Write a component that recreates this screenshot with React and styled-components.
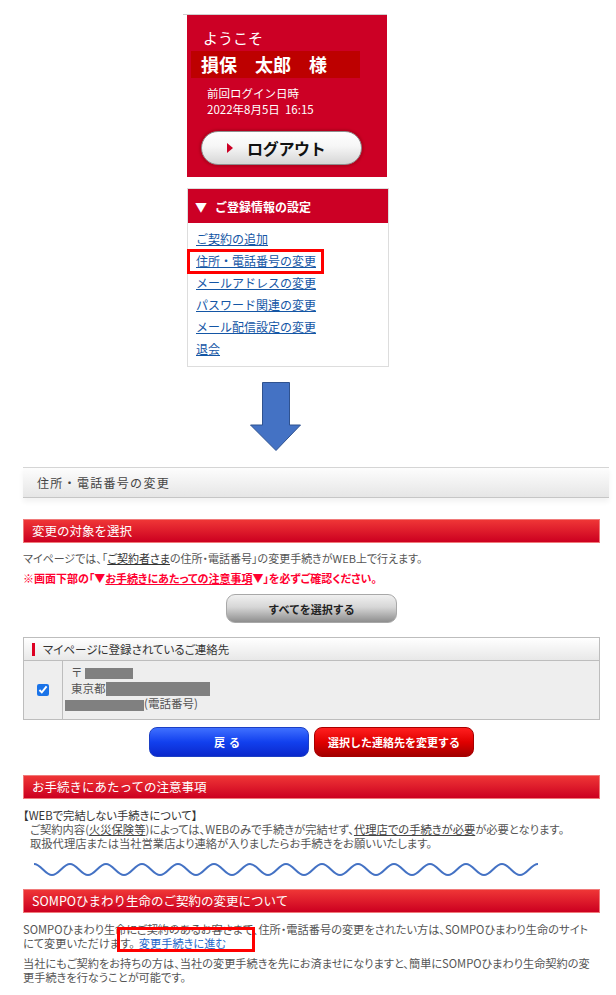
import styled, { createGlobalStyle } from "styled-components";

const GlobalStyle = createGlobalStyle`
  body {
    margin: 0;
    background: #fff;
    font-family: "Noto Sans CJK JP", "Noto Sans", sans-serif;
  }
  * {
    box-sizing: border-box;
  }
`;

const Page = styled.div`
  padding-top: 14px;
  padding-bottom: 20px;
`;

const TopColumn = styled.div`
  margin-left: 187px;
  width: 202px;
  display: flex;
  flex-direction: column;
`;

const TopRule = styled.div`
  width: 204px;
  height: 1px;
  margin-left: -4px;
  background: #cfcfcf;
`;

const Welcome = styled.section`
  width: 200px;
  background: #cc0025;
  color: #fff;
  padding: 13px 0 12px;
  display: flex;
  flex-direction: column;
`;

const Greeting = styled.div`
  margin-left: 16px;
  font-size: 15px;
  line-height: 20px;
`;

const NameBand = styled.div`
  margin: 3px 0 0 4px;
  width: 169px;
  height: 27px;
  padding-left: 10px;
  background: #bd0000;
  font-size: 18px;
  font-weight: 700;
  line-height: 27px;
  white-space: pre;
`;

const LoginInfo = styled.div`
  margin: 7px 0 0 20px;
  font-size: 11.5px;
  line-height: 16px;
`;

const LogoutButton = styled.button`
  margin: 14px 0 0 14px;
  width: 161px;
  height: 34px;
  border-radius: 17px;
  border: 1px solid #8d8d8d;
  background: linear-gradient(#ffffff, #f6f6f6 45%, #d6d6d6);
  box-shadow: 0 0 2px 2px #b5001e;
  display: flex;
  align-items: center;
  padding: 0 0 0 25px;
  font-family: inherit;
  font-size: 16px;
  font-weight: 700;
  color: #111;
  letter-spacing: -0.3px;

  &::before {
    content: "";
    width: 0;
    height: 0;
    border-left: 6px solid #cc0025;
    border-top: 5px solid transparent;
    border-bottom: 5px solid transparent;
    margin-right: 14px;
  }
`;

const Menu = styled.nav`
  margin-top: 11px;
  width: 202px;
  border: 1px solid #dddddd;
  background: #fff;
`;

const MenuHead = styled.div`
  height: 34px;
  background: #cc0025;
  color: #fff;
  padding-left: 7px;
  display: flex;
  align-items: center;
  gap: 8px;
  font-size: 12px;
  font-weight: 700;
`;

const MenuList = styled.ul`
  list-style: none;
  margin: 0;
  padding: 5px 0 6px 8px;
`;

const MenuItem = styled.li`
  position: relative;
  font-size: 12px;
  line-height: 22px;
`;

const MenuLink = styled.a`
  color: #1456a5;
  text-decoration: underline;
`;

const Highlight = styled.span`
  position: absolute;
  left: ${(p) => p.$left}px;
  top: ${(p) => p.$top}px;
  width: ${(p) => p.$width}px;
  height: 25px;
  border: 3px solid #ff0000;
  pointer-events: none;
`;

const Arrow = styled.svg`
  display: block;
  margin: 15px 0 0 63px;
`;

const Main = styled.main`
  margin: 15px 0 0 23px;
  width: 586px;
`;

const PageTitle = styled.div`
  height: 31px;
  border-top: 1px solid #d5d5d5;
  border-bottom: 1px solid #c6c6c6;
  background: linear-gradient(#fdfdfd, #e6e6e6);
  box-shadow: 0 4px 5px rgba(0, 0, 0, 0.05);
  padding-left: 14px;
  font-size: 12px;
  line-height: 29px;
  letter-spacing: 1.3px;
  color: #444;
`;

const Content = styled.div`
  width: 577px;
`;

const BarTitle = styled.h2`
  margin: ${(p) => p.$top}px 0 0;
  height: 24px;
  border: 1px solid #f07a7a;
  background: linear-gradient(#ef3636, #cc0020);
  color: #fff;
  font-size: 12.5px;
  font-weight: 400;
  line-height: 22px;
  padding-left: 8px;
`;

const Lead = styled.p`
  margin: 5px 0 0;
  font-size: 11px;
  line-height: 20px;
  color: #555;
  font-feature-settings: "palt";
  white-space: nowrap;

  u {
    color: #333;
  }
`;

const Warning = styled.p`
  margin: 0;
  font-size: 11px;
  line-height: 20px;
  font-weight: 700;
  color: #ff0030;
  font-feature-settings: "palt";
  white-space: nowrap;
`;

const Centered = styled.div`
  display: flex;
  justify-content: center;
  gap: 5px;
  margin-top: ${(p) => p.$top}px;
`;

const GreyButton = styled.button`
  width: 171px;
  height: 29px;
  border-radius: 9px;
  border: 1px solid #a8a8a8;
  background: linear-gradient(#f0f0f0, #d6d6d6 45%, #8e8e8e);
  font-family: inherit;
  font-size: 11px;
  font-weight: 700;
  color: #222;
`;

const ActionButton = styled.button`
  width: 160px;
  height: 30px;
  border-radius: 8px;
  border: 1px solid ${(p) => (p.$tone === "blue" ? "#1c3fc4" : "#a80000")};
  background: ${(p) =>
    p.$tone === "blue"
      ? "linear-gradient(#3f70ff, #1240ee 50%, #0a28cc)"
      : "linear-gradient(#ff1f1f, #e00000 50%, #a30000)"};
  color: #fff;
  font-family: inherit;
  font-size: 11px;
  font-weight: 700;
  letter-spacing: ${(p) => (p.$tone === "blue" ? "4px" : "0")};
`;

const Table = styled.div`
  margin-top: 14px;
  border: 1px solid #bdbdbd;
`;

const TableHead = styled.div`
  height: 23px;
  border-bottom: 1px solid #bdbdbd;
  background: linear-gradient(#ffffff, #e8e8e8);
  display: flex;
  align-items: center;
  padding-left: 8px;
  font-size: 11.5px;
  color: #333;
  font-feature-settings: "palt";

  &::before {
    content: "";
    width: 3px;
    height: 13px;
    background: #dd0022;
    margin-right: 8px;
  }
`;

const TableRow = styled.div`
  display: grid;
  grid-template-columns: 39px 1fr;
  height: 58px;
  background: #eeeeee;
`;

const CheckCell = styled.div`
  border-right: 1px solid #bdbdbd;
  display: flex;
  align-items: center;
  justify-content: center;

  input {
    margin: 0;
    width: 12px;
    height: 12px;
    accent-color: #1a73e8;
  }
`;

const InfoCell = styled.div`
  padding: 4px 0 0 8px;
  font-size: 11.5px;
  line-height: 15.5px;
  color: #555;
`;

const Redact = styled.span`
  display: inline-block;
  vertical-align: middle;
  width: ${(p) => p.$w}px;
  height: ${(p) => p.$h}px;
  margin-left: ${(p) => p.$ml || 0}px;
  background: #808080;
`;

const NoticeHead = styled.p`
  margin: 9px 0 0;
  font-size: 11.3px;
  line-height: 14px;
  color: #333;
  font-feature-settings: "palt";
`;

const NoticeBody = styled.p`
  margin: 0;
  padding-left: 7px;
  font-size: 11.3px;
  line-height: 14px;
  color: #555;
  font-feature-settings: "palt";
  white-space: nowrap;

  u {
    color: #444;
  }
`;

const Wave = styled.svg`
  display: block;
  margin: 12px 0 0 10px;
`;

const Para = styled.p`
  margin: ${(p) => p.$top}px 0 0;
  font-size: 11.2px;
  line-height: 14px;
  color: #555;
  font-feature-settings: "palt";
  white-space: nowrap;
`;

const InlineLink = styled.a`
  position: relative;
  margin-left: 4px;
  color: #1d67c9;
  text-decoration: underline;
`;

const links = [
  "ご契約の追加",
  "住所・電話番号の変更",
  "メールアドレスの変更",
  "パスワード関連の変更",
  "メール配信設定の変更",
  "退会",
];

const wavePath = (() => {
  const half = 18;
  const top = 2;
  const bottom = 13;
  let d = `M1 ${top}`;
  for (let i = 0; i < 28; i++) {
    const x = 1 + i * half;
    const from = i % 2 === 0 ? top : bottom;
    const to = i % 2 === 0 ? bottom : top;
    d += ` C${x + 7} ${from} ${x + 11} ${to} ${x + half} ${to}`;
  }
  return d;
})();

export default function App() {
  return (
    <>
      <GlobalStyle />
      <Page>
        <TopColumn>
          <TopRule />
          <Welcome>
            <Greeting>ようこそ</Greeting>
            <NameBand>損保　太郎　様</NameBand>
            <LoginInfo>
              前回ログイン日時
              <br />
              2022年8月5日&nbsp;&nbsp;16:15
            </LoginInfo>
            <LogoutButton>ログアウト</LogoutButton>
          </Welcome>

          <Menu>
            <MenuHead>
              <span>▼</span>
              <span>ご登録情報の設定</span>
            </MenuHead>
            <MenuList>
              {links.map((label, i) => (
                <MenuItem key={label}>
                  <MenuLink href="#">{label}</MenuLink>
                  {i === 1 && <Highlight $left={-9} $top={-1} $width={137} />}
                </MenuItem>
              ))}
            </MenuList>
          </Menu>

          <Arrow width="52" height="70" viewBox="0 0 52 70">
            <path
              d="M12.5 0.5 H39.5 V43 H50.5 L26 68.5 L0.5 43 H12.5 Z"
              fill="#4472c4"
              stroke="#2f528f"
              strokeWidth="1"
            />
          </Arrow>
        </TopColumn>

        <Main>
          <PageTitle>住所・電話番号の変更</PageTitle>
          <Content>
            <BarTitle $top={21}>変更の対象を選択</BarTitle>
            <Lead>
              マイページでは、「<u>ご契約者さま</u>の住所・電話番号」の変更手続きがWEB上で行えます。
            </Lead>
            <Warning>
              ※画面下部の「▼<u>お手続きにあたっての注意事項</u>▼」を必ずご確認ください。
            </Warning>

            <Centered $top={6}>
              <GreyButton>すべてを選択する</GreyButton>
            </Centered>

            <Table>
              <TableHead>マイページに登録されているご連絡先</TableHead>
              <TableRow>
                <CheckCell>
                  <input type="checkbox" defaultChecked />
                </CheckCell>
                <InfoCell>
                  〒<Redact $w={48} $h={11} $ml={2} />
                  <br />
                  東京都<Redact $w={104} $h={14} />
                  <br />
                  <Redact $w={79} $h={11} $ml={-6} />(電話番号)
                </InfoCell>
              </TableRow>
            </Table>

            <Centered $top={7}>
              <ActionButton $tone="blue">戻る</ActionButton>
              <ActionButton $tone="red">選択した連絡先を変更する</ActionButton>
            </Centered>

            <BarTitle $top={18}>お手続きにあたっての注意事項</BarTitle>
            <NoticeHead>【WEBで完結しない手続きについて】</NoticeHead>
            <NoticeBody>
              ご契約内容(<u>火災保険等</u>)によっては、WEBのみで手続きが完結せず、
              <u>代理店での手続きが必要</u>が必要となります。
              <br />
              取扱代理店または当社営業店より連絡が入りましたらお手続きをお願いいたします。
            </NoticeBody>

            <Wave width="506" height="15" viewBox="0 0 506 15">
              <path d={wavePath} fill="none" stroke="#4472c4" strokeWidth="2" />
            </Wave>

            <BarTitle $top={12}>SOMPOひまわり生命のご契約の変更について</BarTitle>
            <Para $top={9}>
              SOMPOひまわり生命にご契約のあるお客さまで、住所・電話番号の変更をされたい方は、SOMPOひまわり生命のサイト
              <br />
              にて変更いただけます。
              <InlineLink href="#">
                変更手続きに進む
                <Highlight $left={-22} $top={-8} $width={138} />
              </InlineLink>
            </Para>
            <Para $top={6}>
              当社にもご契約をお持ちの方は、当社の変更手続きを先にお済ませになりますと、簡単にSOMPOひまわり生命契約の変
              <br />
              更手続きを行なうことが可能です。
            </Para>
          </Content>
        </Main>
      </Page>
    </>
  );
}
